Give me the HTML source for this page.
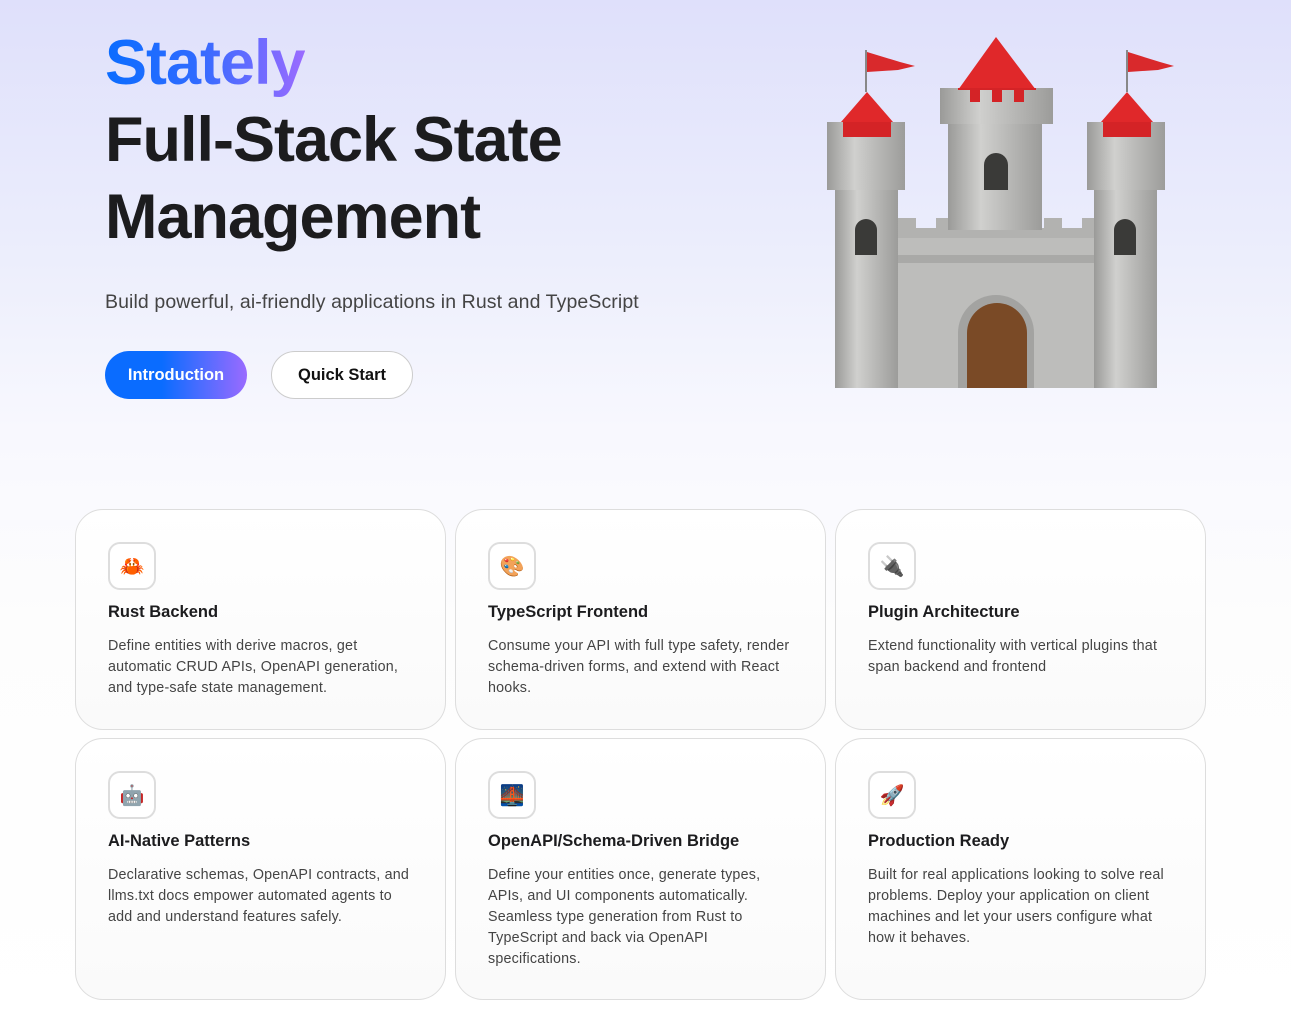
<!DOCTYPE html>
<html><head><meta charset="utf-8"><style>
*{margin:0;padding:0;box-sizing:border-box}
body{width:1291px;height:1030px;overflow:hidden;font-family:"Liberation Sans",sans-serif;background:linear-gradient(180deg,#dfe0fb 0%,#eceefc 25%,#f8f8fe 42%,#fdfdfd 60%,#fff 100%);position:relative}
.s{position:absolute;left:105px;top:26px;font-size:63px;font-weight:700;line-height:74px;background:linear-gradient(90deg,#0a6cff 0%,#2f6bff 45%,#9a6bff 100%);-webkit-background-clip:text;background-clip:text;color:transparent;letter-spacing:-1px}
h1{position:absolute;left:105px;top:102px;font-size:63px;line-height:77px;font-weight:700;color:#1c1c1e;letter-spacing:-1px}
.sub{position:absolute;left:105px;top:291px;font-size:19.5px;color:#444;letter-spacing:.1px}
.b{position:absolute;top:351px;height:48px;border-radius:24px;font-size:16.5px;font-weight:700;display:flex;align-items:center;justify-content:center}
.b1{left:105px;width:142px;color:#fff;background:linear-gradient(90deg,#0a6cff 40%,#9a6bff)}
.b2{left:271px;width:142px;background:#fff;border:1px solid #ccc;color:#111}
.c{position:absolute;width:371px;border:1px solid #ddd;border-radius:28px;background:linear-gradient(180deg,#fff,#fafafa);padding:32px 32px}
.i{width:48px;height:48px;border:2.5px solid #ddd;border-radius:12px;background:#fff;display:flex;align-items:center;justify-content:center;font-size:20px}
.c h3{font-size:16.5px;font-weight:700;color:#1c1c1e;margin-top:11px;line-height:22px}
.c p{font-size:14.3px;line-height:21px;color:#444;margin-top:13px;letter-spacing:.2px}
</style></head><body>
<div class="s">Stately</div>
<h1>Full-Stack State<br>Management</h1>
<div class="sub">Build powerful, ai-friendly applications in Rust and TypeScript</div>
<div class="b b1">Introduction</div>
<div class="b b2">Quick Start</div>
<svg style="position:absolute;left:0;top:0" width="1291" height="420">
<defs><linearGradient id="g" x1="0" x2="1"><stop offset="0" stop-color="#9a9a98"/><stop offset=".35" stop-color="#d0d0ce"/><stop offset="1" stop-color="#9c9c9a"/></linearGradient></defs>
<g stroke="#888" stroke-width="2"><line x1="866" y1="50" x2="866" y2="92"/><line x1="1127" y1="50" x2="1127" y2="92"/></g>
<path d="M867 52 L900 62 L915 66 L898 70 L867 72Z" fill="#d9292c"/>
<path d="M1128 52 L1160 62 L1174 66 L1158 70 L1128 72Z" fill="#d9292c"/>
<rect x="898" y="228" width="196" height="160" fill="#bdbdbb"/>
<path d="M898 218h18v10h20v-10h18v10h20v-10h50v10h20v-10h18v10h20v-10h12v20h-196z" fill="#b2b2b0"/>
<rect x="898" y="255" width="196" height="8" fill="#a9a9a7"/>
<rect x="948" y="120" width="94" height="110" fill="url(#g)"/>
<rect x="940" y="88" width="113" height="36" fill="url(#g)"/>
<path d="M996 37 L1036 90 L958 90Z" fill="#e0282a"/>
<path d="M958 90h12v12h10v-12h12v12h10v-12h12v12h10v-12h12v-2h-78z" fill="#d42326"/>
<path d="M984 190v-25a12 12 0 0 1 24 0v25z" fill="#3a3a38"/>
<rect x="835" y="185" width="63" height="203" fill="url(#g)"/>
<rect x="827" y="122" width="78" height="68" fill="url(#g)"/>
<path d="M867 92 L893 122 L841 122Z" fill="#e0282a"/><rect x="843" y="122" width="48" height="15" fill="#d42326"/>
<path d="M855 255v-25a11 11 0 0 1 22 0v25z" fill="#3a3a38"/>
<rect x="1094" y="185" width="63" height="203" fill="url(#g)"/>
<rect x="1087" y="122" width="78" height="68" fill="url(#g)"/>
<path d="M1127 92 L1153 122 L1101 122Z" fill="#e0282a"/><rect x="1103" y="122" width="48" height="15" fill="#d42326"/>
<path d="M1114 255v-25a11 11 0 0 1 22 0v25z" fill="#3a3a38"/>
<path d="M958 388v-55a38 38 0 0 1 76 0v55z" fill="#a3a3a1"/>
<path d="M967 388v-55a30 30 0 0 1 60 0v55z" fill="#7a4a26"/>
</svg>
<div class="c" style="left:75px;top:509px;height:221px"><div class="i">🦀</div><h3>Rust Backend</h3><p>Define entities with derive macros, get automatic CRUD APIs, OpenAPI generation, and type-safe state management.</p></div>
<div class="c" style="left:455px;top:509px;height:221px"><div class="i">🎨</div><h3>TypeScript Frontend</h3><p>Consume your API with full type safety, render schema-driven forms, and extend with React hooks.</p></div>
<div class="c" style="left:835px;top:509px;height:221px"><div class="i">🔌</div><h3>Plugin Architecture</h3><p>Extend functionality with vertical plugins that span backend and frontend</p></div>
<div class="c" style="left:75px;top:738px;height:262px"><div class="i">🤖</div><h3>AI-Native Patterns</h3><p>Declarative schemas, OpenAPI contracts, and llms.txt docs empower automated agents to add and understand features safely.</p></div>
<div class="c" style="left:455px;top:738px;height:262px"><div class="i">🌉</div><h3>OpenAPI/Schema-Driven Bridge</h3><p>Define your entities once, generate types, APIs, and UI components automatically. Seamless type generation from Rust to TypeScript and back via OpenAPI specifications.</p></div>
<div class="c" style="left:835px;top:738px;height:262px"><div class="i">🚀</div><h3>Production Ready</h3><p>Built for real applications looking to solve real problems. Deploy your application on client machines and let your users configure what how it behaves.</p></div>
</body></html>
